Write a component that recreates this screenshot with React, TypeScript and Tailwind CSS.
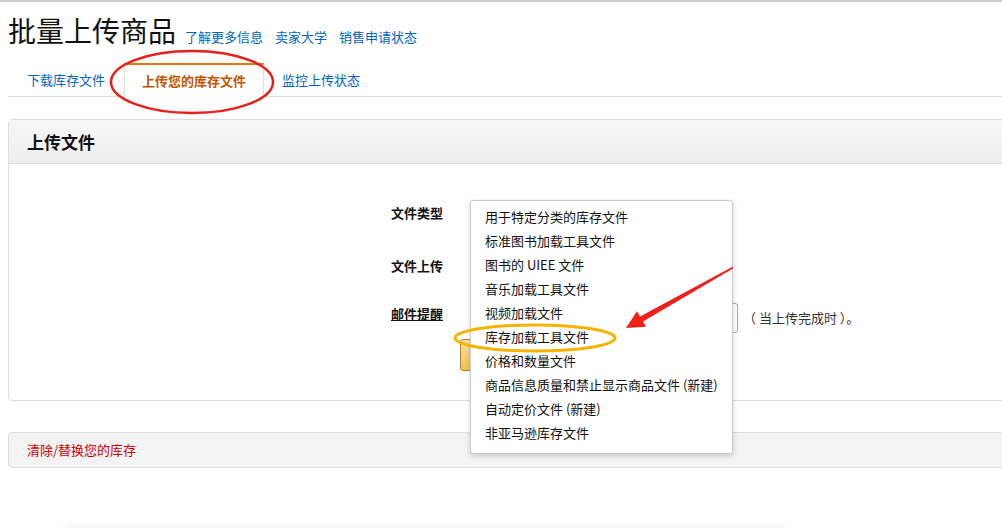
import React from "react";

const tiposArquivo = [
  "用于特定分类的库存文件",
  "标准图书加载工具文件",
  "图书的 UIEE 文件",
  "音乐加载工具文件",
  "视频加载文件",
  "库存加载工具文件",
  "价格和数量文件",
  "商品信息质量和禁止显示商品文件 (新建)",
  "自动定价文件 (新建)",
  "非亚马逊库存文件",
];

function Abas() {
  return (
    <ul className="mt-[15px] flex h-[34px] border-b border-[#ddd] text-[13px]">
      <li className="flex items-center px-[19px] text-[#0066c0]">下载库存文件</li>
      <li className="-mb-px flex items-center border-x border-t-2 border-x-[#ddd] border-t-[#e47911] bg-white px-[17px] font-bold text-[#c45500]">
        上传您的库存文件
      </li>
      <li className="flex items-center px-[18px] text-[#0066c0]">监控上传状态</li>
    </ul>
  );
}

function Formulario() {
  return (
    <div className="pl-[382px] pt-[35px] text-[13px] text-[#111]">
      <div className="flex h-[28px] items-center">
        <span className="w-[79px] font-bold">文件类型</span>
        <div className="h-[28px] w-[200px]" />
      </div>
      <div className="mt-[25px] flex h-[28px] items-center">
        <span className="w-[79px] font-bold">文件上传</span>
        <div className="h-[28px] w-[200px]" />
      </div>
      <div className="mt-[23px] flex h-[30px] items-start">
        <span className="w-[79px] pt-[1px] font-bold underline">邮件提醒</span>
        <div className="h-[30px] w-[268px] rounded-[3px] border border-[#a6a6a6]" />
        <span className="ml-[5px] self-center text-[#333]">（ 当上传完成时 ）。</span>
      </div>
      <div className="mt-[6px] ml-[69px] h-[32px] w-[130px] rounded-[3px] border border-[#a88734] bg-gradient-to-b from-[#f7dfa5] to-[#f0c14b]" />
    </div>
  );
}

function ListaSuspensa() {
  return (
    <ul className="absolute left-[470px] top-[198px] w-[263px] rounded-[3px] border border-[#ccc] bg-white pt-[4px] pb-[8px] text-[13px] text-[#111] shadow-[0_2px_5px_rgba(0,0,0,0.18)]">
      {tiposArquivo.map((tipo) => (
        <li key={tipo} className="flex h-[24px] items-center whitespace-nowrap px-[14px]">
          {tipo}
        </li>
      ))}
    </ul>
  );
}

function Anotacoes() {
  return (
    <svg className="pointer-events-none absolute inset-0" width="1002" height="528">
      <ellipse cx="192" cy="80" rx="81" ry="31" fill="none" stroke="#e8201a" strokeWidth="2.5" />
      <ellipse cx="535" cy="336" rx="80" ry="13" fill="none" stroke="#f5b400" strokeWidth="3" />
      <polygon
        points="733,264.5 640,314.4 637,309.2 626,326 646,324.8 643,319.6 733,266.5"
        fill="#f0201a"
      />
    </svg>
  );
}

export default function App() {
  return (
    <div className="relative h-[528px] w-[1002px] overflow-hidden border-t-2 border-[#ccc] bg-white font-['Microsoft_YaHei','Noto_Sans_CJK_SC',sans-serif]">
      <div className="pl-2">
        <div className="flex items-end pt-[10px]">
          <h1 className="text-[28px] leading-[36px] text-[#111]">批量上传商品</h1>
          <div className="mb-[2px] ml-[9px] flex gap-[12px] text-[13px] text-[#0066c0]">
            <span>了解更多信息</span>
            <span>卖家大学</span>
            <span>销售申请状态</span>
          </div>
        </div>

        <Abas />

        <div className="mt-[22px] w-[1010px] rounded-[4px] border border-[#ddd]">
          <div className="flex h-[44px] items-center border-b border-[#ddd] bg-gradient-to-b from-[#f7f7f7] to-[#eeeeee] px-[18px] text-[17px] font-bold text-[#111]">
            上传文件
          </div>
          <div className="h-[236px]">
            <Formulario />
          </div>
        </div>

        <div className="mt-[31px] flex h-[36px] w-[1010px] items-center rounded-[4px] border border-[#ddd] bg-[#f3f3f3] px-[18px] text-[13px] text-[#cc0000]">
          清除/替换您的库存
        </div>

        <div className="mt-[60px] ml-[56px] h-[4px] w-[723px] rounded-t-[3px] border-t border-[#ccc] shadow-[0_-3px_6px_rgba(0,0,0,0.06)]" />
      </div>

      <ListaSuspensa />
      <Anotacoes />
    </div>
  );
}
